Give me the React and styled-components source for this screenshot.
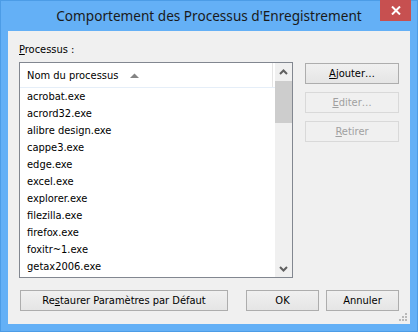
import React from 'react'
import styled, { createGlobalStyle } from 'styled-components'

const GlobalStyle = createGlobalStyle`
  html, body {
    margin: 0;
    padding: 0;
    background: #64b0f6;
  }
  * {
    box-sizing: border-box;
  }
`

const Window = styled.div`
  width: 418px;
  height: 332px;
  background: #64b0f6;
  border: 1px solid #4c9ce6;
  display: flex;
  flex-direction: column;
  font-family: 'DejaVu Sans Condensed', 'DejaVu Sans', sans-serif;
  font-size: 11px;
  color: #000;
`

const TitleBar = styled.div`
  height: 30px;
  position: relative;
  display: flex;
  align-items: center;
  justify-content: center;
  font-family: 'Noto Sans', 'Open Sans', sans-serif;
  font-size: 13.6px;
  color: #1a1a1a;
  padding-bottom: 1px;
`

const CloseButton = styled.div`
  position: absolute;
  top: -1px;
  right: 6px;
  width: 31px;
  height: 21px;
  background: #c75050;
  display: flex;
  align-items: center;
  justify-content: center;
`

const Client = styled.div`
  flex: 1;
  margin: 0 7px 7px 7px;
  background: #f0f0f0;
  padding: 12px 11px 13px 11px;
  display: flex;
  flex-direction: column;
  position: relative;
`

const Label = styled.div`
  height: 14px;
  line-height: 14px;
  margin-bottom: 5px;
`

const U = styled.span`
  text-decoration: underline;
  text-underline-offset: 1px;
`

const MainRow = styled.div`
  display: flex;
  gap: 12px;
`

const ListBox = styled.div`
  width: 274px;
  height: 216px;
  border: 1px solid #828790;
  background: #fff;
  display: flex;
  overflow: hidden;
`

const ListContent = styled.div`
  flex: 1;
  display: flex;
  flex-direction: column;
  overflow: hidden;
`

const Header = styled.div`
  height: 25px;
  flex: none;
  display: flex;
  border-bottom: 1px solid #e5eef8;
`

const HeaderCell = styled.div`
  width: 253px;
  border-right: 1px solid #e5e5e5;
  display: flex;
  align-items: center;
  padding-left: 7px;
  gap: 12px;
`

const Row = styled.div`
  height: 17px;
  flex: none;
  line-height: 17px;
  padding-left: 7px;
  white-space: nowrap;
`

const ScrollBar = styled.div`
  width: 17px;
  flex: none;
  background: #f0f0f0;
  display: flex;
  flex-direction: column;
`

const ScrollArrow = styled.div`
  height: 17px;
  flex: none;
  display: flex;
  align-items: center;
  justify-content: center;
`

const Thumb = styled.div`
  height: 42px;
  margin: 1px 0 0 0;
  background: #cdcdcd;
  flex: none;
`

const ScrollTrack = styled.div`
  flex: 1;
`

const ButtonColumn = styled.div`
  display: flex;
  flex-direction: column;
  gap: 8px;
  padding-top: 1px;
  width: 94px;
`

const Button = styled.div`
  height: 21px;
  width: ${p => p.$width || 94}px;
  border: 1px solid ${p => (p.$disabled ? '#d9d9d9' : '#adadad')};
  background: ${p =>
    p.$disabled ? '#f0f0f0' : 'linear-gradient(#f0f0f0, #e5e5e5)'};
  color: ${p => (p.$disabled ? '#a0a0a0' : '#000')};
  display: flex;
  align-items: center;
  justify-content: center;
  line-height: 14px;
`

const Footer = styled.div`
  display: flex;
  margin-top: 12px;
  padding-left: 1px;
`

const Spacer = styled.div`
  width: ${p => p.$w}px;
`

const Grip = styled.svg`
  position: absolute;
  right: 2px;
  bottom: 2px;
`

const processes = [
  'acrobat.exe',
  'acrord32.exe',
  'alibre design.exe',
  'cappe3.exe',
  'edge.exe',
  'excel.exe',
  'explorer.exe',
  'filezilla.exe',
  'firefox.exe',
  'foxitr~1.exe',
  'getax2006.exe',
]

const Chevron = ({ up }) => (
  <svg width="9" height="6" viewBox="0 0 9 6">
    <polyline
      points={up ? '1,5 4.5,1.5 8,5' : '1,1 4.5,4.5 8,1'}
      fill="none"
      stroke="#606060"
      strokeWidth="2"
    />
  </svg>
)

const App = () => (
  <>
    <GlobalStyle />
    <Window>
      <TitleBar>
        Comportement des Processus d'Enregistrement
        <CloseButton>
          <svg width="10" height="9" viewBox="0 0 10 9">
            <path d="M1,0.5 L9,8.5 M9,0.5 L1,8.5" stroke="#fff" strokeWidth="2" />
          </svg>
        </CloseButton>
      </TitleBar>
      <Client>
        <Label>
          <U>P</U>rocessus :
        </Label>
        <MainRow>
          <ListBox>
            <ListContent>
              <Header>
                <HeaderCell>
                  Nom du processus
                  <svg width="9" height="5" viewBox="0 0 9 5">
                    <polygon points="0,5 4.5,0.5 9,5" fill="#848484" />
                  </svg>
                </HeaderCell>
              </Header>
              {processes.map(p => (
                <Row key={p}>{p}</Row>
              ))}
            </ListContent>
            <ScrollBar>
              <ScrollArrow>
                <Chevron up />
              </ScrollArrow>
              <Thumb />
              <ScrollTrack />
              <ScrollArrow>
                <Chevron />
              </ScrollArrow>
            </ScrollBar>
          </ListBox>
          <ButtonColumn>
            <Button>
              <span>
                <U>A</U>jouter…
              </span>
            </Button>
            <Button $disabled>
              <span>
                <U>E</U>diter…
              </span>
            </Button>
            <Button $disabled>
              <span>
                <U>R</U>etirer
              </span>
            </Button>
          </ButtonColumn>
        </MainRow>
        <Footer>
          <Button $width={208}>
            <span>
              Re<U>s</U>taurer Paramètres par Défaut
            </span>
          </Button>
          <Spacer $w={18} />
          <Button $width={73}>OK</Button>
          <Spacer $w={7} />
          <Button $width={73}>Annuler</Button>
        </Footer>
        <Grip width="10" height="10" viewBox="0 0 10 10">
          {[
            [7, 1],
            [4, 4],
            [7, 4],
            [1, 7],
            [4, 7],
            [7, 7],
          ].map(([x, y]) => (
            <rect key={`${x}-${y}`} x={x} y={y} width="2" height="2" fill="#b9b9b9" />
          ))}
        </Grip>
      </Client>
    </Window>
  </>
)

export default App
